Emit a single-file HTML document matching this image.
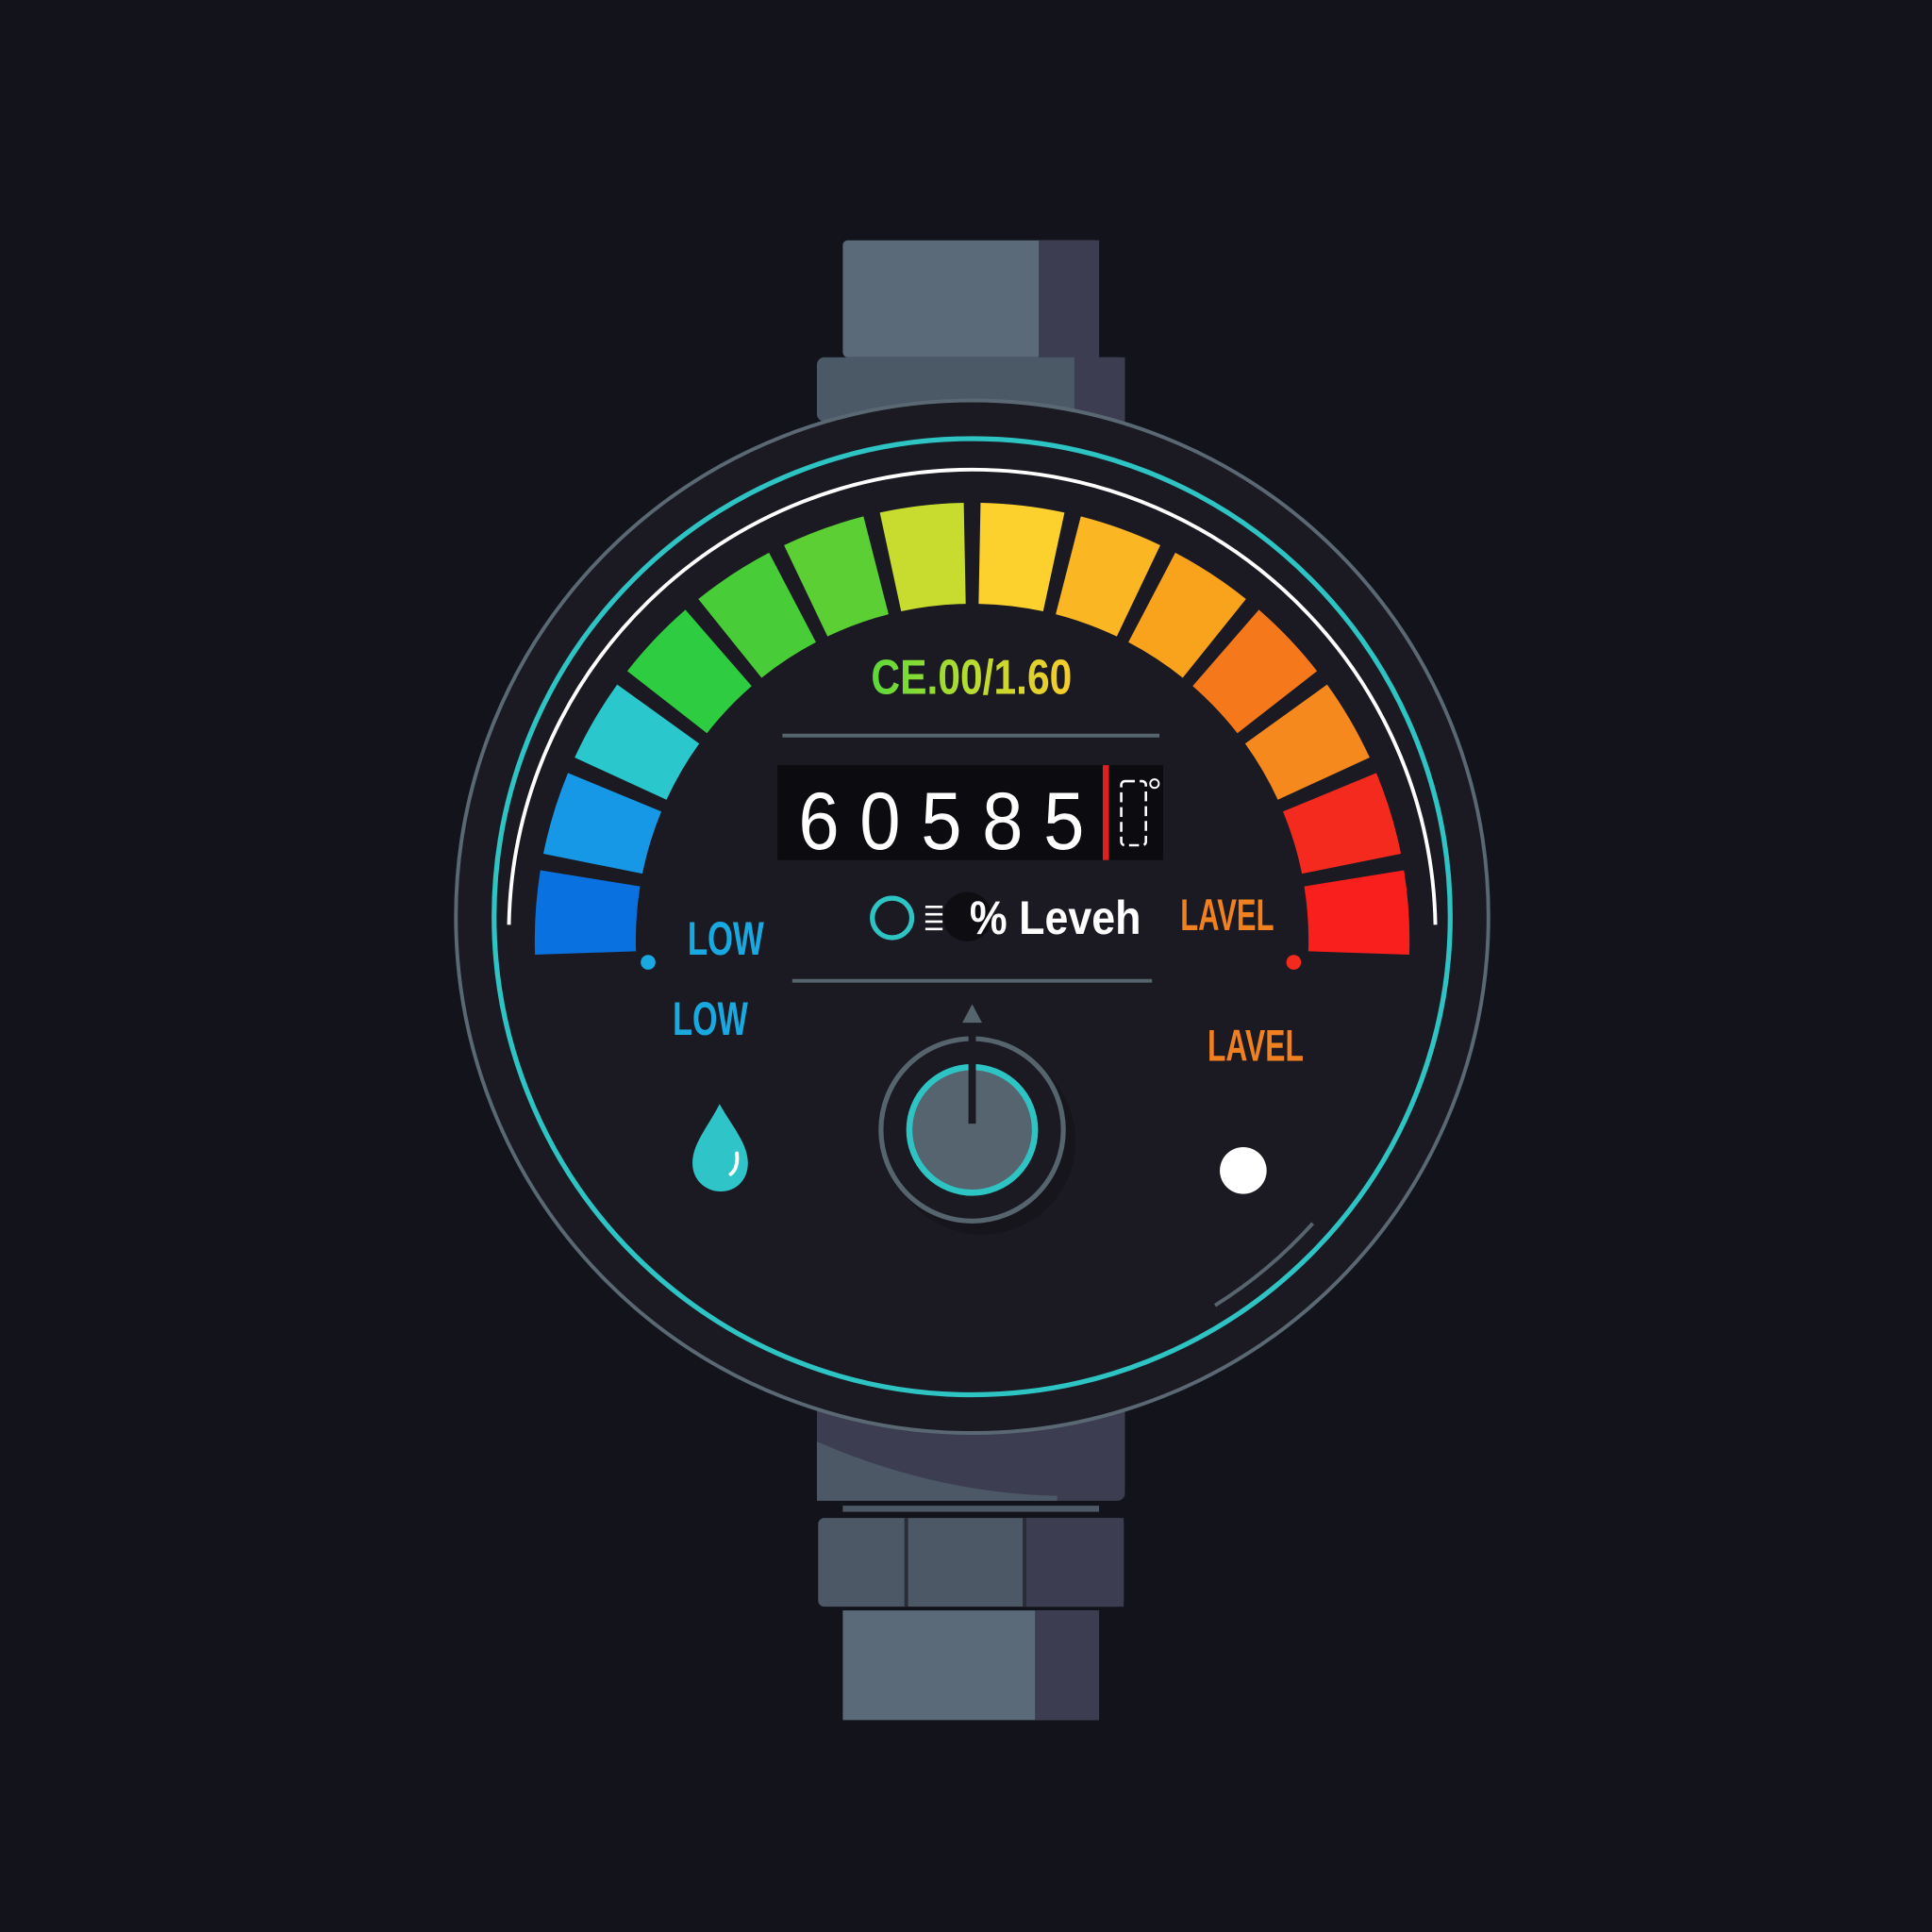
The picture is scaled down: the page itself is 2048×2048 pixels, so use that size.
<!DOCTYPE html>
<html><head><meta charset="utf-8"><style>
html,body{margin:0;padding:0;background:#12131b;}
svg{display:block}
text{font-family:"Liberation Sans Narrow","Liberation Sans",sans-serif;font-weight:bold}
</style></head><body>
<svg id="s" width="2048" height="2048" viewBox="0 0 1568 1568" xmlns="http://www.w3.org/2000/svg">
<rect width="1568" height="1568" fill="#12131b"/>
<!-- top strap -->
<rect x="684" y="195" width="208" height="95" rx="4" fill="#5a6a78"/>
<rect x="843" y="195" width="49" height="95" fill="#3c3d50"/>
<rect x="663" y="290" width="250" height="52" rx="6" fill="#4b5866"/>
<rect x="872" y="290" width="41" height="52" fill="#3c3d50"/>
<!-- bottom strap -->
<rect x="663" y="1140" width="250" height="78" rx="6" fill="#3c3d50"/>
<path d="M663 1170 Q760 1212 858 1214 L858 1218 L663 1218 Z" fill="#4c5866"/>
<rect x="684" y="1222" width="208" height="5" fill="#4c5866"/>
<rect x="664" y="1232" width="248" height="72" rx="5" fill="#4c5866"/>
<rect x="832" y="1232" width="80" height="72" fill="#3c3d50"/>
<rect x="734" y="1232" width="3" height="72" fill="#2a2d38"/>
<rect x="830" y="1232" width="3" height="72" fill="#2a2d38"/>
<rect x="684" y="1307" width="208" height="89" fill="#5a6a78"/>
<rect x="840" y="1307" width="52" height="89" fill="#3c3d50"/>
<!-- dial -->
<circle cx="789" cy="744" r="419" fill="#1b1a22" stroke="#5a6874" stroke-width="3"/>
<circle cx="789" cy="744" r="388" fill="none" stroke="#2ec4c4" stroke-width="4"/>
<g id="segs"></g>
<path id="warc" fill="none" stroke="#ffffff" stroke-width="3"/>
<path id="garc" fill="none" stroke="#56646e" stroke-width="3"/>
<!-- lines -->
<line x1="635" y1="597" x2="941" y2="597" stroke="#56646e" stroke-width="3"/>
<line x1="643" y1="796" x2="935" y2="796" stroke="#56646e" stroke-width="3"/>
<defs><linearGradient id="gy" x1="0" x2="1"><stop offset="0" stop-color="#5cd83a"/><stop offset="0.5" stop-color="#b8dc30"/><stop offset="1" stop-color="#f8cc2a"/></linearGradient></defs>
<text x="707" y="563" font-size="40" fill="url(#gy)" textLength="163" lengthAdjust="spacingAndGlyphs">CE.00/1.60</text>
<rect x="631" y="621" width="313" height="77" fill="#0c0c10"/>
<text x="648" y="689" font-size="66" fill="#fff" font-family="Liberation Sans" style="font-weight:normal" textLength="232" lengthAdjust="spacingAndGlyphs">6 0 5 8 5</text>
<rect x="895" y="621" width="5" height="77" fill="#e02020"/>
<rect x="910" y="634" width="20" height="52" rx="3" fill="none" stroke="#fff" stroke-width="2" stroke-dasharray="8 4"/>
<circle cx="937" cy="636" r="3.5" fill="none" stroke="#fff" stroke-width="1.5"/>
<circle cx="724" cy="745" r="16" fill="none" stroke="#2ec4c4" stroke-width="4"/>
<circle cx="785" cy="744" r="20" fill="#0e0e12"/>
<g stroke="#fff" stroke-width="2"><line x1="751" y1="736" x2="765" y2="736"/><line x1="751" y1="742" x2="765" y2="742"/><line x1="751" y1="748" x2="765" y2="748"/><line x1="751" y1="754" x2="765" y2="754"/></g>
<text x="787" y="758" font-size="38" fill="#fff" textLength="139" lengthAdjust="spacingAndGlyphs">% Leveh</text>
<text x="558" y="775" font-size="38" fill="#1aa8e0" textLength="62" lengthAdjust="spacingAndGlyphs">LOW</text>
<text x="546" y="840" font-size="38" fill="#1aa8e0" textLength="61" lengthAdjust="spacingAndGlyphs">LOW</text>
<text x="958" y="755" font-size="36" fill="#f08020" textLength="76" lengthAdjust="spacingAndGlyphs">LAVEL</text>
<text x="980" y="861" font-size="36" fill="#f08020" textLength="78" lengthAdjust="spacingAndGlyphs">LAVEL</text>
<circle cx="526" cy="781" r="6" fill="#1aa8e0"/>
<circle cx="1050" cy="781" r="6" fill="#f52a1e"/>
<circle cx="1009" cy="950" r="19" fill="#fff"/>
<!-- drop -->
<path d="M584 896 C594 914 607 928 607 944 C607 958 597 967 585 967 C573 967 562 958 562 944 C562 928 575 914 584 896 Z" fill="#2ec4c8"/>
<path d="M598 936 C599 944 597 950 593 953" fill="none" stroke="#fff" stroke-width="3" stroke-linecap="round"/>
<!-- knob -->
<circle cx="797" cy="926" r="76" fill="#15151b"/>
<circle cx="789" cy="917" r="74" fill="#1b1a22" stroke="#56646e" stroke-width="4"/>
<circle cx="789" cy="917" r="51" fill="#55646e" stroke="#2ec4c4" stroke-width="5"/>
<line x1="789" y1="912" x2="789" y2="832" stroke="#1b1a22" stroke-width="6"/>
<path d="M781 830 L789 815 L797 830 Z" fill="#56646e"/>
</svg>
<script>
var cx=789,cy=763,R=355,r=273;
var cols=["#0a72e0","#1698e6","#2ac8cc","#2ecc40","#48cc38","#5ccf34","#c8dc30","#fcd12e","#fbb624","#f9a21c","#f5781a","#f6891e","#f52a1e","#f81f1c"];
var start=-3,end=183,n=14,step=(end-start)/n,gap=2.2,h="";
function pt(rad,a,c){c=c||cy;var t=a*Math.PI/180;return [cx-rad*Math.cos(t),c-rad*Math.sin(t)];}
for(var i=0;i<n;i++){var a1=start+i*step+gap/2,a2=start+(i+1)*step-gap/2;
var p1=pt(R,a1),p2=pt(R,a2),p3=pt(r,a2),p4=pt(r,a1);
h+='<path fill="'+cols[i]+'" d="M'+p1+' A'+R+' '+R+' 0 0 1 '+p2+' L'+p3+' A'+r+' '+r+' 0 0 0 '+p4+' Z"/>';}
document.getElementById('segs').innerHTML=h;
var w1=pt(376,-1,744),w2=pt(376,181,744);
document.getElementById('warc').setAttribute('d','M'+w1+' A376 376 0 0 1 '+w2);
var g1=pt(372,222,744),g2=pt(372,238,744);
document.getElementById('garc').setAttribute('d','M'+g1+' A372 372 0 0 1 '+g2);
</script>
</body></html>
